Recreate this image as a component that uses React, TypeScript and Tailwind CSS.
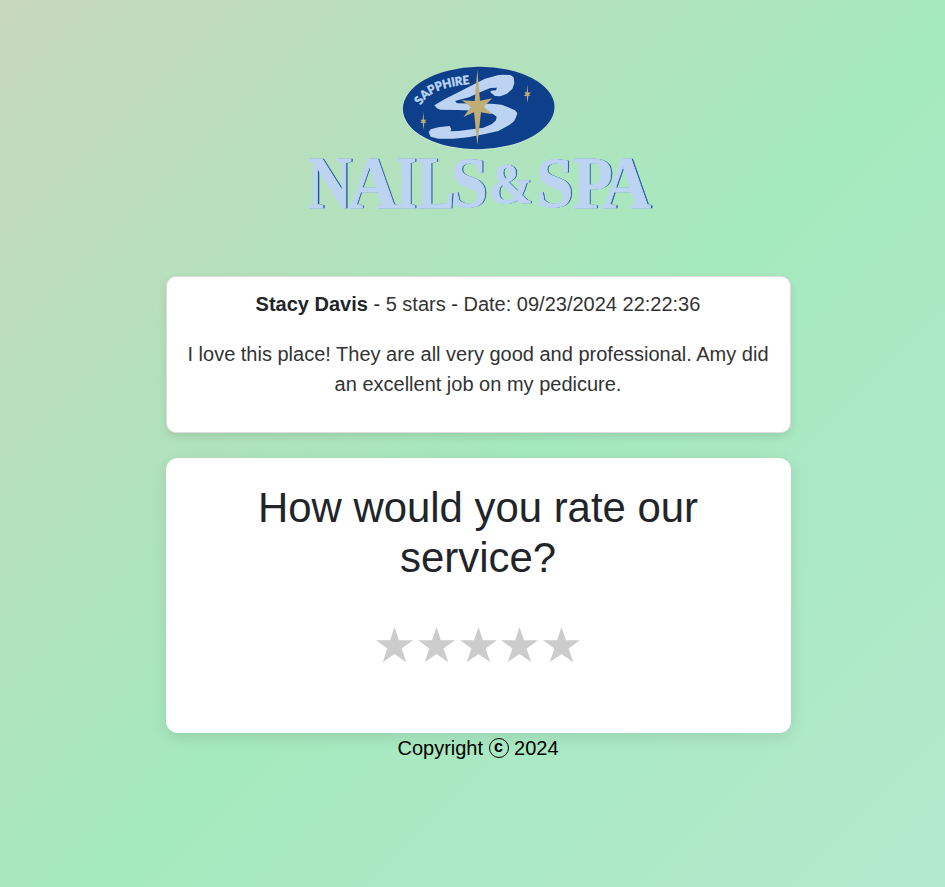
import React from "react";

type Glyph = { ch: string; x: number; size: number; sx: number; y: number };

// Each wordmark letter is condensed on its own, relative to the logo's origin.
const WORDMARK: Glyph[] = [
  { ch: "N", x: 7.6, size: 74, sx: 0.83, y: 147.5 },
  { ch: "A", x: 48, size: 74, sx: 0.93, y: 147.5 },
  { ch: "I", x: 95.4, size: 74, sx: 0.74, y: 147.5 },
  { ch: "L", x: 116.4, size: 74, sx: 0.77, y: 147.5 },
  { ch: "S", x: 151, size: 72.5, sx: 0.91, y: 147.2 },
  { ch: "&", x: 188.8, size: 57, sx: 0.93, y: 142.8 },
  { ch: "S", x: 236, size: 72.5, sx: 0.93, y: 147.2 },
  { ch: "P", x: 272.4, size: 74, sx: 0.89, y: 147.5 },
  { ch: "A", x: 301.6, size: 74, sx: 0.93, y: 147.5 },
];

function Wordmark() {
  return (
    <g strokeWidth="0.9" fontFamily="'Liberation Serif', serif" fontWeight="700">
      {WORDMARK.map((g, i) => (
        <g key={i} fontSize={g.size}>
          <text fill="#1d539b" stroke="#1d539b" strokeWidth="0.3" transform={`translate(${g.x + 1.3} ${g.y + 0.1}) scale(${g.sx} 1)`}>
            {g.ch}
          </text>
          <text fill="#bcd4f1" stroke="#bcd4f1" transform={`translate(${g.x} ${g.y}) scale(${g.sx} 1)`}>
            {g.ch}
          </text>
        </g>
      ))}
    </g>
  );
}

function Logo() {
  return (
    <svg width="355" height="155" viewBox="0 0 355 155" className="block overflow-visible" role="img" aria-label="Sapphire Nails & Spa">
      <g transform="translate(95 0) scale(0.33333)">
        <ellipse cx="249.5" cy="145.5" rx="228" ry="124.5" fill="#d3ead9" transform="rotate(-1 250 145)" />
        <ellipse cx="251" cy="144" rx="227.5" ry="123.5" fill="#0d3f8a" transform="rotate(-1 250 145)" />
        <path
          d="M118 136 L150 117 L190 97 L222 80 L270 56 L308 46 L322 44 L346 45 L356 52 L358 70 L352 87 L336 101 L316 109 L300 108 L286 97 L288 92 L303 91 L306 83 L286 84 L255 97 L222 112 L180 123 L186 130 L244 131 L290 131 L320 134 L343 143 L360 151 L367 160 L362 174 L357 184 L343 195 L310 213 L270 222 L220 232 L175 236 L130 236 L107 230 L101 217 L107 208 L130 202 L164 198 L169 208 L166 214 L190 213 L230 208 L265 203 L290 193 L303 181 L305 170 L294 162 L276 156 L240 152 L190 150 L136 149 L126 145 Z"
          fill="#bcd4f1"
        />
        <path
          d="M247 29 L255 122 L292 115 L266 140 L292 163 L258 157 L247 255 L237 157 L205 171 L228 141 L200 121 L239 123 Z"
          fill="#bfad75"
        />
        <path d="M397 73 L399 97 L408 98 L402 103 L406 108 L400 107 L398 129 L395 108 L387 108 L392 102 L388 97 L395 97 Z" fill="#bfad75" />
        <path d="M85 156 L87 179 L95 179 L90 184 L94 188 L88 188 L86 210 L83 188 L76 189 L80 184 L76 179 L83 179 Z" fill="#bfad75" />
        <path id="sapphire-arc" d="M78 136 C96 98 150 78 230 72" fill="none" />
        <text fill="#bcd4f1" stroke="#bcd4f1" strokeWidth="1.4" fontFamily="Lato, sans-serif" fontWeight="900" fontSize="36">
          <textPath href="#sapphire-arc" textLength="166" lengthAdjust="spacingAndGlyphs">
            SAPPHIRE
          </textPath>
        </text>
      </g>
      <Wordmark />
    </svg>
  );
}

function Star() {
  return (
    <svg width="37" height="36" viewBox="0 0 37 36" className="block" fill="#cccccc">
      <path d="M18.5 0 L22.9 13.2 H37 L25.6 21.6 L30.3 35.3 L18.5 27 L6.7 35.3 L11.4 21.6 L0 13.2 H14.1 Z" />
    </svg>
  );
}

export default function App() {
  return (
    <div className="min-h-[887px] bg-[linear-gradient(135deg,#c7d7bc_0%,#a5e9be_53%,#b3e9cd_100%)] pt-15 font-['Liberation_Sans',Arial,sans-serif] text-xl leading-[30px] text-[#212529]">
      <main className="ml-[166px] flex w-[625px] flex-col">
        <header className="mb-[61px] ml-[134px]">
          <Logo />
        </header>
        <article className="h-[157px] rounded-[10px] border border-[#dddddd] bg-white pt-3 pr-4 pl-[15px] text-center shadow-[0_4px_8px_rgba(0,0,0,0.1)]">
          <p>
            <strong>Stacy Davis</strong> - <span className="text-[#333333]">5 stars</span> -{" "}
            <span className="text-[#333333]">Date: 09/23/2024 22:22:36</span>
          </p>
          <p className="mt-5 text-[#333333]">
            I love this place! They are all very good and professional. Amy did an excellent job on my pedicure.
          </p>
        </article>
        <section className="mt-[25px] h-[275px] rounded-xl bg-white px-[60px] pt-[25px] text-center shadow-[0_4px_15px_rgba(0,0,0,0.1)]">
          <h1 className="pr-px text-[41.9px] leading-[50px]">How would you rate our service?</h1>
          <div className="mt-[44px] flex justify-center gap-[4.7px] pr-px">
            <Star />
            <Star />
            <Star />
            <Star />
            <Star />
          </div>
        </section>
        <footer className="flex items-center justify-center gap-[5.5px] pr-px text-black">
          <span>Copyright</span>
          <span className="flex size-5 items-center justify-center rounded-full border border-black text-[16px] leading-none font-bold">
            <span className="-mt-[2px]">c</span>
          </span>
          <span>2024</span>
        </footer>
      </main>
    </div>
  );
}
